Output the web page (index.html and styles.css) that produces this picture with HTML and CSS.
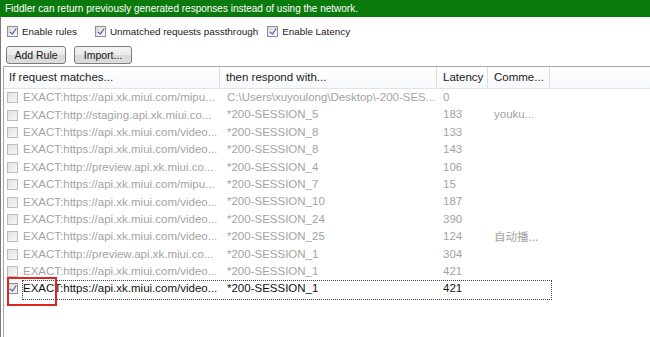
FILE: index.html
```html
<!DOCTYPE html>
<html>
<head>
<meta charset="utf-8">
<link rel="stylesheet" href="styles.css">
</head>
<body>
<div class="app">
  <div class="banner">Fiddler can return previously generated responses instead of using the network.</div>
  <div class="panel">
    <div class="options">
      <label class="opt opt1"><span class="cb on"></span>Enable rules</label>
      <label class="opt opt2"><span class="cb on"></span>Unmatched requests passthrough</label>
      <label class="opt"><span class="cb on"></span>Enable Latency</label>
    </div>
    <div class="buttons">
      <button class="btn btn-add">Add Rule</button>
      <button class="btn btn-imp">Import...</button>
    </div>
    <div class="list">
      <div class="head">
        <div class="c1 h">If request matches...</div>
        <div class="c2 h">then respond with...</div>
        <div class="c3 h">Latency</div>
        <div class="c4 h">Comme...</div>
        <div class="rest"></div>
      </div>
      <div class="rows">
        <div class="row"><div class="c1"><span class="cb off"></span>EXACT:https://api.xk.miui.com/mipu...</div><div class="c2">C:\Users\xuyoulong\Desktop\-200-SES...</div><div class="c3">0</div><div class="c4"></div></div>
        <div class="row"><div class="c1"><span class="cb off"></span>EXACT:http://staging.api.xk.miui.co...</div><div class="c2">*200-SESSION_5</div><div class="c3">183</div><div class="c4">youku...</div></div>
        <div class="row"><div class="c1"><span class="cb off"></span>EXACT:https://api.xk.miui.com/video...</div><div class="c2">*200-SESSION_8</div><div class="c3">133</div><div class="c4"></div></div>
        <div class="row"><div class="c1"><span class="cb off"></span>EXACT:https://api.xk.miui.com/video...</div><div class="c2">*200-SESSION_8</div><div class="c3">143</div><div class="c4"></div></div>
        <div class="row"><div class="c1"><span class="cb off"></span>EXACT:http://preview.api.xk.miui.co...</div><div class="c2">*200-SESSION_4</div><div class="c3">106</div><div class="c4"></div></div>
        <div class="row"><div class="c1"><span class="cb off"></span>EXACT:https://api.xk.miui.com/mipu...</div><div class="c2">*200-SESSION_7</div><div class="c3">15</div><div class="c4"></div></div>
        <div class="row"><div class="c1"><span class="cb off"></span>EXACT:https://api.xk.miui.com/video...</div><div class="c2">*200-SESSION_10</div><div class="c3">187</div><div class="c4"></div></div>
        <div class="row"><div class="c1"><span class="cb off"></span>EXACT:https://api.xk.miui.com/video...</div><div class="c2">*200-SESSION_24</div><div class="c3">390</div><div class="c4"></div></div>
        <div class="row"><div class="c1"><span class="cb off"></span>EXACT:https://api.xk.miui.com/video...</div><div class="c2">*200-SESSION_25</div><div class="c3">124</div><div class="c4 cjk">自动播...</div></div>
        <div class="row"><div class="c1"><span class="cb off"></span>EXACT:http://preview.api.xk.miui.co...</div><div class="c2">*200-SESSION_1</div><div class="c3">304</div><div class="c4"></div></div>
        <div class="row"><div class="c1"><span class="cb off"></span>EXACT:https://api.xk.miui.com/video...</div><div class="c2">*200-SESSION_1</div><div class="c3">421</div><div class="c4"></div></div>
        <div class="row sel"><div class="c1"><span class="cb on"></span>EXACT:https://api.xk.miui.com/video...</div><div class="c2">*200-SESSION_1</div><div class="c3">421</div><div class="c4"></div></div>
      </div>
      <div class="mark"></div>
    </div>
  </div>
</div>
</body>
</html>
```

FILE: styles.css
```css
* { box-sizing: border-box; }
html, body { margin: 0; padding: 0; background: #fff; }
body {
  width: 650px;
  height: 337px;
  overflow: hidden;
  font-family: "Liberation Sans", Arial, sans-serif;
  font-size: 11.5px;
  color: #1a1a1a;
}
.app {
  height: 337px;
  display: flex;
  flex-direction: column;
}
.banner {
  height: 17px;
  background: #0b7a0c;
  color: #fff;
  padding: 1px 0 0 5px;
  line-height: 15px;
  font-size: 10px;
  white-space: nowrap;
  flex: none;
}
.panel {
  flex: 1;
  border-left: 1px solid #7a7a7a;
  display: flex;
  flex-direction: column;
}
.options {
  display: flex;
  height: 27px;
  align-items: center;
  padding: 2px 0 0 6px;
  flex: none;
  font-size: 9.9px;
}
.opt {
  display: flex;
  align-items: center;
  gap: 4px;
  white-space: nowrap;
}
.opt1 { margin-right: 18px; }
.opt2 { margin-right: 9px; }
.cb {
  display: inline-block;
  width: 11px;
  height: 11px;
  border: 1px solid #8f8f8f;
  background: linear-gradient(135deg, #d8d8d8, #fbfbfb);
  position: relative;
  flex: none;
}
.cb.on::after {
  content: "";
  position: absolute;
  left: 3px;
  top: 0px;
  width: 3px;
  height: 6px;
  border: solid #2d4e9e;
  border-width: 0 1.5px 1.5px 0;
  transform: rotate(35deg);
}
.cb.off {
  border-color: #bdbdbd;
  background: linear-gradient(135deg, #e4e4e4, #f6f6f6);
}
.buttons {
  display: flex;
  gap: 8px;
  padding: 2px 0 0 5px;
  height: 22px;
  flex: none;
}
.btn {
  font-family: inherit;
  font-size: 10.5px;
  height: 18px;
  padding: 0;
  border: 1px solid #7d7d7d;
  border-radius: 3px;
  background: linear-gradient(#f4f4f4, #e9e9e9 50%, #d9d9d9 51%, #dcdcdc);
  color: #1a1a1a;
  line-height: 15px;
}
.btn-add { width: 60px; }
.btn-imp { width: 58px; }
.list {
  flex: 1;
  margin-left: 2px;
  border-left: 1px solid #a5a5a5;
  border-top: 1px solid #a5a5a5;
  position: relative;
  display: flex;
  flex-direction: column;
}
.head {
  display: flex;
  height: 22px;
  border-bottom: 1px solid #e3e3e3;
  background: linear-gradient(#ffffff, #f7f8fa);
  flex: none;
}
.head .h {
  border-right: 1px solid #dedede;
  line-height: 21px;
  color: #1a1a1a;
}
.rest { flex: 1; }
.c1, .c2, .c3, .c4 {
  white-space: nowrap;
  overflow: hidden;
  flex: none;
}
.c1 { width: 216px; padding-left: 5px; }
.c2 { width: 217px; padding-left: 6px; }
.c3 { width: 51px; padding-left: 6px; }
.c4 { width: 62px; padding-left: 6px; }
.row {
  display: flex;
  height: 17.4px;
  line-height: 17px;
  color: #a3a3a3;
}
.row .c1 {
  display: flex;
  align-items: center;
  padding-left: 3px;
  gap: 5px;
}
.row .c2 { padding-left: 7px; }
.cjk { font-family: "Noto Sans CJK SC", sans-serif; font-size: 11.5px; }
.row.sel {
  color: #111;
  position: relative;
}
.row.sel::after {
  content: "";
  position: absolute;
  left: 18px;
  top: 0;
  width: 528px;
  height: 18px;
  border: 1px dotted #444;
  pointer-events: none;
}
.mark {
  position: absolute;
  left: 3px;
  top: 210px;
  width: 50px;
  height: 29px;
  border: 2px solid #e0231e;
}
```
